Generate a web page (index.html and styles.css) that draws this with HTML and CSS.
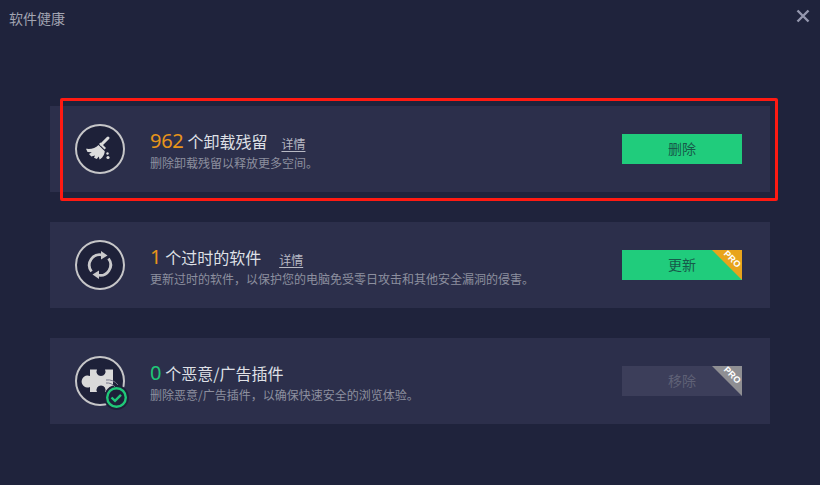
FILE: index.html
```html
<!DOCTYPE html>
<html lang="zh-CN">
<head>
<meta charset="utf-8">
<title>软件健康</title>
<link rel="stylesheet" href="styles.css">
</head>
<body>
<div class="window">
  <header class="titlebar">
    <span class="title">软件健康</span>
    <svg class="close" width="14" height="14" viewBox="0 0 14 14"><path d="M1.500 1.500L12.500 12.500M12.500 1.500L1.500 12.500" stroke="#9497ae" stroke-width="2.400" fill="none"/></svg>
  </header>
  <main class="list">
    <section class="card">
      <div class="icon">
        <svg width="50" height="50" viewBox="0 0 50 50">
          <circle cx="25" cy="25" r="24" fill="#1e2139" stroke="#c6c6c8" stroke-width="2"/>
          <path d="M26.500 20.500L33 14" fill="none" stroke="#dcdcdc" stroke-width="3" stroke-linecap="round"/>
          <path d="M25.500 18.500l5.500 5.500-1.500 1.500-5.500-5.500z" fill="#dcdcdc"/>
          <path d="M23.500 21L29.800 27.300C29.500 31 27 34.500 24.500 35.500L23.800 32.500L21.800 35L19 33.800L20 31.500L16.300 32.500L14 30L16.800 28.300L12.500 28L11 24.800C16 25.300 20.500 24.500 23.500 21z" fill="#dcdcdc"/>
          <circle cx="32.500" cy="29.500" r="1.200" fill="#dcdcdc"/>
          <circle cx="33" cy="33.500" r="1.600" fill="#dcdcdc"/>
        </svg>
      </div>
      <div class="info">
        <div class="heading"><span class="count orange">962</span><span class="label">个卸载残留</span><a class="details">详情</a></div>
        <p class="desc">删除卸载残留以释放更多空间。</p>
      </div>
      <button class="action green">删除</button>
    </section>
    <section class="card">
      <div class="icon">
        <svg width="50" height="50" viewBox="0 0 50 50">
          <circle cx="25" cy="25" r="24" fill="#1e2139" stroke="#c6c6c8" stroke-width="2"/>
          <path d="M16.500 31.500a10.500 10.500 0 0 1 11-16.500" fill="none" stroke="#c9c9cb" stroke-width="2.800"/>
          <path d="M33.500 18.500a10.500 10.500 0 0 1-11 16.500" fill="none" stroke="#c9c9cb" stroke-width="2.800"/>
          <path d="M26 11l6.500 4.500-6.500 4z" fill="#c9c9cb"/>
          <path d="M24 39l-6.500-4.500 6.500-4z" fill="#c9c9cb"/>
        </svg>
      </div>
      <div class="info">
        <div class="heading"><span class="count orange">1</span><span class="label">个过时的软件</span><a class="details details-wide">详情</a></div>
        <p class="desc">更新过时的软件，以保护您的电脑免受零日攻击和其他安全漏洞的侵害。</p>
      </div>
      <button class="action green">更新<span class="ribbon gold"><span class="pro">PRO</span></span></button>
    </section>
    <section class="card">
      <div class="icon">
        <svg width="50" height="50" viewBox="0 0 50 50">
          <circle cx="25" cy="25" r="24" fill="#1e2139" stroke="#c6c6c8" stroke-width="2"/>
          <path d="M15 13.500H22A4.500 4.500 0 1 0 30 13.500H38V36H30A4.500 4.500 0 1 0 22 36H15V31A6 6 0 1 1 15 20Z" fill="#d9d9d9"/>
          <circle cx="41.500" cy="41.500" r="12.500" fill="#1e2139"/>
          <path d="M31 27a10 10 0 0 1 9 4M31 24a13 13 0 0 1 12 5" fill="none" stroke="#74758a" stroke-width="1"/>
          <circle cx="41.500" cy="41.500" r="9.300" fill="#1e2139" stroke="#20c878" stroke-width="2.400"/>
          <path d="M36.500 41.500l3.500 3.300 6-6" fill="none" stroke="#20c878" stroke-width="2.400"/>
        </svg>
      </div>
      <div class="info">
        <div class="heading"><span class="count green-text">0</span><span class="label">个恶意/广告插件</span></div>
        <p class="desc">删除恶意/广告插件，以确保快速安全的浏览体验。</p>
      </div>
      <button class="action muted">移除<span class="ribbon grey"><span class="pro">PRO</span></span></button>
    </section>
  </main>
  <div class="highlight"></div>
</div>
</body>
</html>
```
FILE: styles.css
```css
* { box-sizing: border-box; }
html, body { margin: 0; padding: 0; }
body {
  width: 820px;
  height: 485px;
  overflow: hidden;
  background: #1f233c;
  font-family: "Noto Sans CJK SC", "Noto Sans", sans-serif;
}
.window { position: relative; width: 820px; height: 485px; }
.titlebar {
  display: flex;
  justify-content: space-between;
  align-items: center;
  height: 38px;
  padding: 0 10px 2px 9px;
}
.title { font-size: 14px; color: #a2a4b2; line-height: 20px; }
.close { margin-top: -4px; }
.list {
  display: flex;
  flex-direction: column;
  gap: 30px;
  padding: 68px 50px 0;
}
.card {
  display: flex;
  align-items: center;
  height: 86px;
  padding: 0 28px 0 25px;
  background: #2c2f4b;
}
.icon { width: 50px; height: 50px; flex: none; margin-right: 25px; }
.icon svg { display: block; overflow: visible; }
.info { flex: 1; min-width: 0; }
.heading { display: flex; align-items: baseline; height: 26px; color: #e6e6ea; }
.count {
  font-family: "Noto Sans", sans-serif;
  font-size: 20px;
  line-height: 26px;
  letter-spacing: -0.3px;
  margin-right: 4px;
}
.orange { color: #e8951a; }
.green-text { color: #20c878; }
.label { font-size: 16px; line-height: 26px; color: #dfe0e6; }
.details {
  margin-left: 14px;
  font-size: 12px;
  color: #b8b9c4;
  text-decoration: underline;
  text-underline-offset: 2px;
  transform: translateY(1px);
}
.details-wide { margin-left: 18px; }
.desc { margin: 1px 0 0; font-size: 12px; line-height: 15px; color: #8d8f9f; }
.action {
  position: relative;
  flex: none;
  width: 120px;
  height: 30px;
  padding: 0 0 2px;
  border: 0;
  overflow: hidden;
  font: 14px "Noto Sans CJK SC", "Noto Sans", sans-serif;
}
.green { background: #20cc7c; color: #17594a; }
.muted { background: #3c3e5a; color: #5f6176; }
.ribbon {
  position: absolute;
  top: 0;
  right: 0;
  width: 30px;
  height: 30px;
  clip-path: polygon(0 0, 100% 0, 100% 100%);
}
.gold { background: #e8a41c; }
.grey { background: #8f8f93; }
.pro {
  position: absolute;
  top: 4px;
  right: -2px;
  width: 24px;
  text-align: center;
  font: bold 9px/11px "Liberation Sans", sans-serif;
  color: #fff;
  transform: rotate(45deg);
}
.highlight {
  position: absolute;
  left: 60px;
  top: 98px;
  width: 718px;
  height: 103px;
  border: 3px solid #ff1a12;
  border-radius: 2px;
}
```
